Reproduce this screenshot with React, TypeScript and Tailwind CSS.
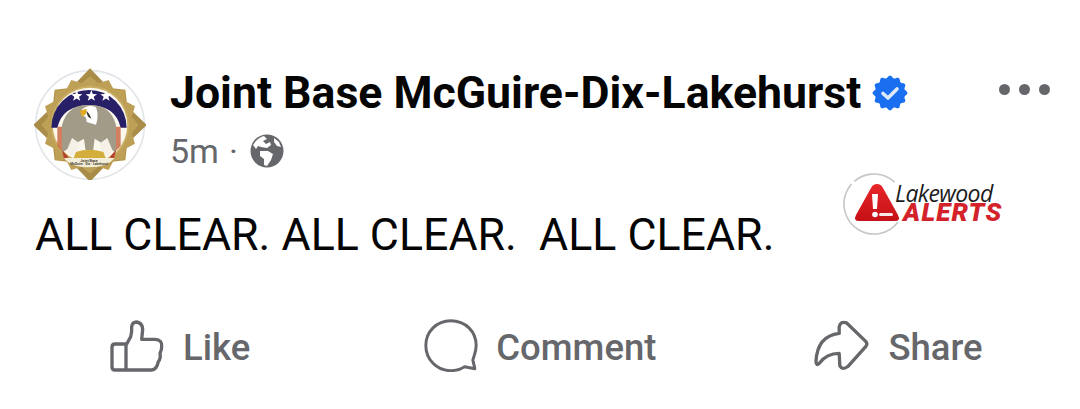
const grey = "#65676b";

function scallop(cx: number, cy: number, r: number, amp: number, n: number) {
  const pts: string[] = [];
  for (let i = 0; i <= 240; i++) {
    const a = (i / 240) * Math.PI * 2;
    const rr = r + amp * Math.cos(a * n);
    pts.push(`${(cx + rr * Math.cos(a)).toFixed(2)},${(cy + rr * Math.sin(a)).toFixed(2)}`);
  }
  return pts.join(" ");
}

function starPts(cx: number, cy: number, R: number, r: number, n: number, rot = -Math.PI / 2) {
  const pts: string[] = [];
  for (let i = 0; i < n * 2; i++) {
    const a = rot + (i * Math.PI) / n;
    const rr = i % 2 === 0 ? R : r;
    pts.push(`${(cx + rr * Math.cos(a)).toFixed(1)},${(cy + rr * Math.sin(a)).toFixed(1)}`);
  }
  return pts.join(" ");
}

function Avatar() {
  return (
    <svg viewBox="39 34 336 336" className="w-[112px] h-[112px] shrink-0">
      <circle cx="207" cy="205" r="163" fill="#fff" stroke="#e2e5e9" strokeWidth="5" />
      <polygon points={starPts(207, 205, 170, 118, 4)} fill="#a88c48" />
      <polygon points={starPts(207, 205, 150, 118, 4, -Math.PI / 4)} fill="#b3944a" />
      <polygon points={starPts(207, 205, 146, 128, 16)} fill="#bd9f55" />
      <circle cx="207" cy="205" r="118" fill="#c9ad62" />
      <circle cx="207" cy="205" r="112" fill="#fbf7ec" />
      <g transform="translate(-3 10)">
        <path d="M94 203 A113 113 0 0 1 320 203 L302 203 Q286 136 207 136 Q128 136 112 203 Z" fill="#282066" />
        <path d="M112 200 L126 200 L126 272 L112 258 Z" fill="#c8603c" opacity="0.8" />
        <path d="M288 200 L302 200 L302 258 L288 272 Z" fill="#c8603c" opacity="0.8" />
        <path d="M126 278 L126 196 Q140 142 190 136 L224 136 Q274 142 288 196 L288 278 L246 250 L224 236 L218 282 L198 282 L192 236 L168 250 Z" fill="#a29b88" />
        <polygon points={starPts(170, 108, 18, 7.5, 5)} fill="#fff" />
        <polygon points={starPts(214, 108, 18, 7.5, 5)} fill="#fff" />
        <polygon points={starPts(258, 108, 18, 7.5, 5)} fill="#fff" />
        <path d="M186 148 Q206 130 228 142 Q238 165 228 194 L200 186 Q200 168 190 168 Z" fill="#fff" />
        <path d="M198 152 Q208 158 214 176 L204 170 Z" fill="#3c3a30" />
        <path d="M180 152 L200 146 L198 162 L186 170 Z" fill="#e0ac1e" />
        <path d="M140 272 L156 234 L178 250 L176 284 L152 286 Z" fill="#f5f1e6" />
        <path d="M278 272 L262 234 L240 250 L242 284 L266 286 Z" fill="#f5f1e6" />
        <path d="M168 276 Q207 262 250 276 L258 296 L160 296 Z" fill="#d4ae3c" />
        <path d="M126 270 L146 292 L132 296 Z" fill="#b9412a" />
        <path d="M288 270 L268 292 L282 296 Z" fill="#b9412a" />
        <path d="M132 294 L284 294 Q262 322 207 322 Q152 322 132 294 Z" fill="#f3eeda" />
        <text x="207" y="305" textAnchor="middle" fontSize="11" fontWeight="700" fill="#4a4130" fontFamily="Roboto, sans-serif">Joint Base</text>
        <text x="207" y="316" textAnchor="middle" fontSize="10" fontWeight="700" fill="#4a4130" fontFamily="Roboto, sans-serif">McGuire · Dix · Lakehurst</text>
      </g>
    </svg>
  );
}

function Verified() {
  return (
    <svg viewBox="0 0 36 36" className="w-[36px] h-[36px] shrink-0">
      <polygon points={scallop(18, 18, 16.2, 1.2, 12)} fill="#1a6ff0" />
      <path d="M11 18.5 L16 23 L25 14" fill="none" stroke="#dfeaf9" strokeWidth="3.6" strokeLinecap="round" strokeLinejoin="round" />
    </svg>
  );
}

function Globe() {
  return (
    <svg viewBox="0 0 34 34" className="w-[34px] h-[34px] shrink-0">
      <circle cx="17" cy="17" r="16.5" fill={grey} />
      <path d="M3 11 Q7 4 14 2 L17 5 L13 7 L16 10 L20 8 L21 11 L17 14 L11 13 L8 12 L6 15 Z" fill="#fff" />
      <path d="M10 17 L18 17 L23 20 L21 26 L17 32 L14 31 L14 25 L10 22 Z" fill="#fff" />
      <path d="M24 4 L29 8 L31 13 L27 12 L24 8 Z" fill="#fff" />
    </svg>
  );
}

function LikeIcon() {
  return (
    <svg viewBox="60 60 162 156" className="w-[54px] h-[52px] shrink-0" fill="none" stroke={grey} strokeWidth="10" strokeLinejoin="round" strokeLinecap="round">
      <path d="M108 136 L122 110 Q126 98 125 80 Q127 66 140 66 Q157 69 158 88 L155 118 L195 118 Q218 120 215 140 Q215 150 210 160 Q213 175 205 185 Q200 210 185 210 L75 210 Q66 210 66 200 L66 142 Q66 132 75 132 L108 132 L108 210" />
    </svg>
  );
}

function CommentIcon() {
  return (
    <svg viewBox="1000 60 162 160" className="w-[54px] h-[53px] shrink-0" fill="none" stroke={grey} strokeWidth="9" strokeLinejoin="round" strokeLinecap="round">
      <path d="M1080 65 C1125 65 1157 98 1157 140 C1157 158 1150 172 1147 184 L1153 210 L1122 204 C1110 212 1095 216 1080 216 C1038 216 1005 182 1005 140 C1005 98 1038 65 1080 65 Z" />
    </svg>
  );
}

function ShareIcon() {
  return (
    <svg viewBox="74 64 166 156" className="w-[55px] h-[52px] shrink-0" fill="none" stroke={grey} strokeWidth="10" strokeLinejoin="round" strokeLinecap="round">
      <path d="M172 72 L230 128 Q237 136 230 144 L176 204 Q160 216 152 202 L150 164 Q112 164 90 194 Q80 204 80 188 Q84 112 150 104 L150 84 Q154 66 172 72 Z" />
    </svg>
  );
}

function Watermark() {
  return (
    <div className="absolute left-[842px] top-[171px] w-[166px] h-[68px]">
      <svg viewBox="0 0 68 68" className="absolute left-0 top-0 w-[68px] h-[68px]">
        <defs>
          <linearGradient id="tri" x1="0" y1="0" x2="0" y2="1">
            <stop offset="0" stopColor="#e8262a" />
            <stop offset="1" stopColor="#c41016" />
          </linearGradient>
        </defs>
        <circle cx="32" cy="33" r="30" fill="none" stroke="#c6c6c6" strokeWidth="1.6" strokeDasharray="6 4 44 44 90 0" transform="rotate(-150 32 33)" />
        <path d="M35 13 Q39 13 41 17 L56 44 Q59 50 53 50 L17 50 Q11 50 14 44 L29 17 Q31 13 35 13 Z" fill="url(#tri)" />
        <path d="M30 23 L36 23 L35 38 L31 38 Z" fill="#fff" />
        <circle cx="33" cy="43.5" r="2.8" fill="#fff" />
        <rect x="37" y="42" width="14" height="3" rx="1.5" fill="#fff" opacity="0.9" />
      </svg>
      <div className="absolute left-[53px] top-[14px] font-['Open_Sans',sans-serif] italic font-medium text-[23px] leading-[16px] tracking-[-0.6px] text-[#1c1c1c] whitespace-nowrap">Lakewood</div>
      <div className="absolute left-[61px] top-[32px] font-['Roboto',sans-serif] italic font-black text-[26px] leading-[18px] tracking-[1.2px] text-[#d4222b] whitespace-nowrap">ALERTS</div>
    </div>
  );
}

function Action({ icon, label, gap }: { icon: React.ReactNode; label: string; gap: string }) {
  return (
    <div className={`flex items-center ${gap}`}>
      {icon}
      <span className="text-[36.5px] leading-[52px] font-medium text-[#65676b] pt-[5px]">{label}</span>
    </div>
  );
}

export default function App() {
  return (
    <div className="relative w-[1080px] h-[409px] overflow-hidden bg-white font-['Roboto',sans-serif]">
      <div className="flex items-start pl-[34px] pt-[68px] pr-[30px]">
        <Avatar />
        <div className="ml-[24px] flex-1">
          <div className="flex items-center gap-[11px] h-[50px]">
            <span className="text-[44.6px] leading-[50px] font-bold text-[#050505] whitespace-nowrap">Joint Base McGuire-Dix-Lakehurst</span>
            <Verified />
          </div>
          <div className="flex items-center h-[44px] mt-[11px] text-[34px] leading-[44px] text-[#65676b]">
            <span>5m</span>
            <span className="ml-[10px]">·</span>
            <span className="ml-[12px]"><Globe /></span>
          </div>
        </div>
        <div className="flex gap-[9px] pt-[16px]">
          <span className="w-[11px] h-[11px] rounded-full bg-[#65676b]" />
          <span className="w-[11px] h-[11px] rounded-full bg-[#65676b]" />
          <span className="w-[11px] h-[11px] rounded-full bg-[#65676b]" />
        </div>
      </div>
      <p className="pl-[35px] mt-[29px] text-[44.7px] leading-[52px] text-[#050505] whitespace-pre">ALL CLEAR. ALL CLEAR.  ALL CLEAR.</p>
      <div className="flex items-center pl-[110px] mt-[56px]">
        <Action icon={<LikeIcon />} label="Like" gap="gap-[19px]" />
        <div className="ml-[174px]"><Action icon={<CommentIcon />} label="Comment" gap="gap-[18px]" /></div>
        <div className="ml-[158px]"><Action icon={<ShareIcon />} label="Share" gap="gap-[19px]" /></div>
      </div>
      <Watermark />
    </div>
  );
}
